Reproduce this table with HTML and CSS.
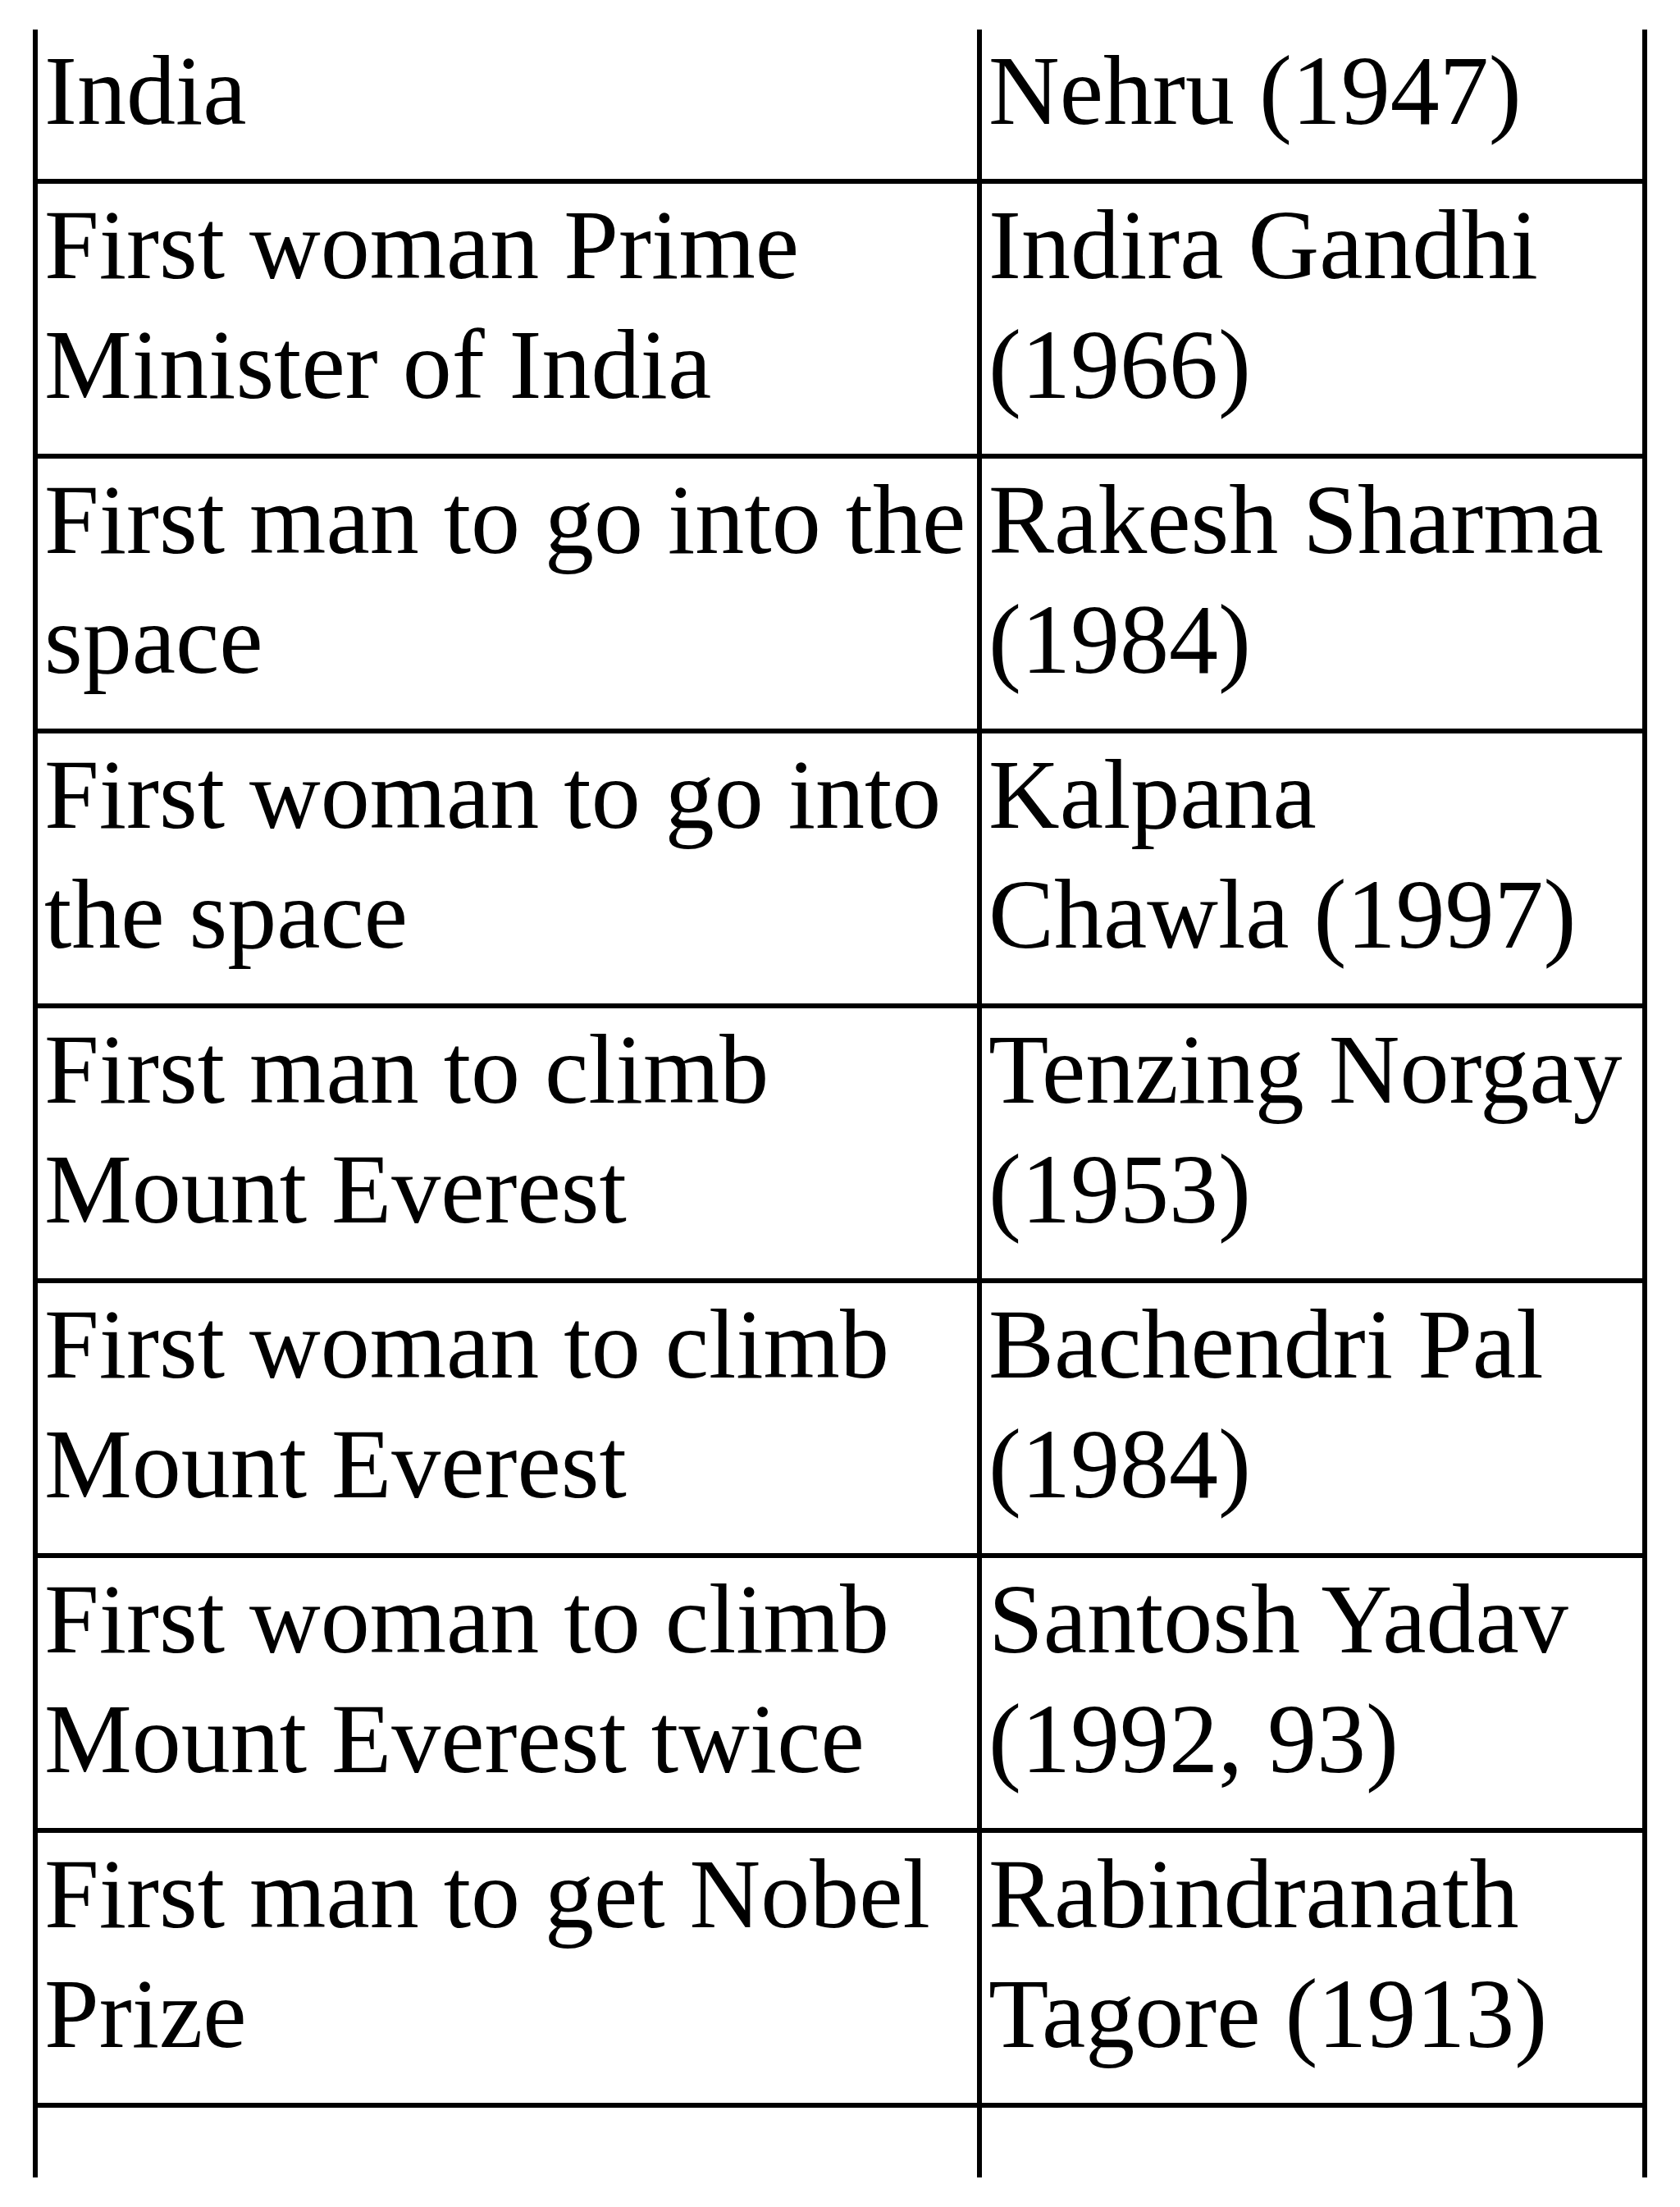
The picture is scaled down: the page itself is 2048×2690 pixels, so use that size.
FILE: index.html
```html
<!DOCTYPE html>
<html lang="en">
<head>
<meta charset="utf-8">
<title>Famous Indian Firsts</title>
<link rel="stylesheet" href="styles.css">
</head>
<body>
<div class="firsts">
  <div class="row row-cut">
    <div class="cell what">India</div>
    <div class="cell who">Nehru (1947)</div>
  </div>
  <div class="row">
    <div class="cell what">First woman Prime<br>Minister of India</div>
    <div class="cell who">Indira Gandhi<br>(1966)</div>
  </div>
  <div class="row">
    <div class="cell what">First man to go into the<br>space</div>
    <div class="cell who">Rakesh Sharma<br>(1984)</div>
  </div>
  <div class="row">
    <div class="cell what">First woman to go into<br>the space</div>
    <div class="cell who">Kalpana<br>Chawla (1997)</div>
  </div>
  <div class="row">
    <div class="cell what">First man to climb<br>Mount Everest</div>
    <div class="cell who">Tenzing Norgay<br>(1953)</div>
  </div>
  <div class="row">
    <div class="cell what">First woman to climb<br>Mount Everest</div>
    <div class="cell who">Bachendri Pal<br>(1984)</div>
  </div>
  <div class="row">
    <div class="cell what">First woman to climb<br>Mount Everest twice</div>
    <div class="cell who">Santosh Yadav<br>(1992, 93)</div>
  </div>
  <div class="row">
    <div class="cell what">First man to get Nobel<br>Prize</div>
    <div class="cell who">Rabindranath<br>Tagore (1913)</div>
  </div>
  <div class="row row-tail">
    <div class="cell what"></div>
    <div class="cell who"></div>
  </div>
</div>
</body>
</html>
```

FILE: styles.css
```css
html, body {
  margin: 0;
  background: #ffffff;
}

body {
  padding: 36px 0 0 40px;
  font-family: "Liberation Serif", "Times New Roman", serif;
  color: #000000;
}

.firsts {
  display: flex;
  flex-direction: column;
  width: 1968px;
}

.row {
  display: grid;
  grid-template-columns: 1151px 817px;
  height: 335px;
}

.cell {
  box-sizing: border-box;
  border-left: 6px solid #000000;
  border-top: 6px solid #000000;
  padding: 2px 8px 0 8px;
  font-size: 120px;
  line-height: 146px;
  white-space: nowrap;
  overflow: hidden;
}

.cell.who {
  border-right: 6px solid #000000;
}

.row-cut {
  height: 182px;
}

.row-cut .cell {
  border-top: none;
}

.row-tail {
  height: 91px;
}
```
